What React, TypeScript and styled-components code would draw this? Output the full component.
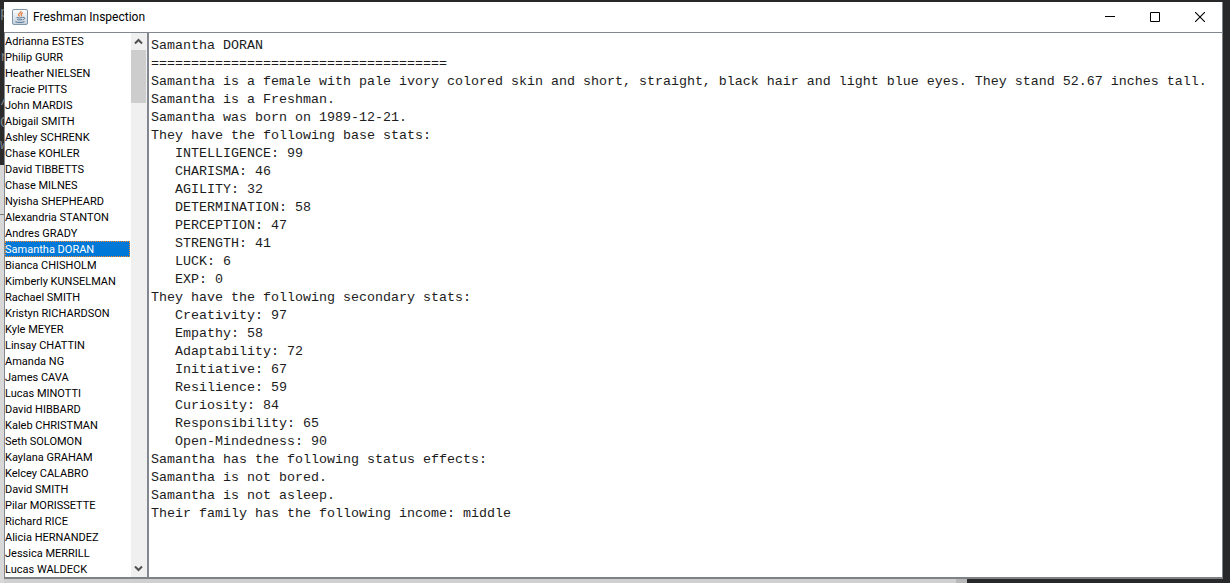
import React, { useState } from "react";
import styled, { createGlobalStyle } from "styled-components";

const GlobalStyle = createGlobalStyle`
  *, *::before, *::after { box-sizing: border-box; }
  body { margin: 0; }
`;

const Desktop = styled.div`
  height: 100vh;
  display: grid;
  grid-template-columns: 4px minmax(0, 1fr) 7px;
  grid-template-rows: 2px minmax(0, 1fr) 4px;
  background: #26282a;
`;

const EditorEdge = styled.div`
  grid-column: 1;
  grid-row: 1 / 4;
  display: flex;
  flex-direction: column;
  padding-top: 2px;
  color: #7b8288;
  font: 14px/22px "Liberation Mono", monospace;
  white-space: pre;
  background: linear-gradient(#2b2b2b 165px, #d8d8d8 165px 214px, #777 214px 215px, #d8d8d8 215px);
`;

const BottomEdge = styled.div`
  grid-column: 2;
  grid-row: 3;
  margin-right: 21%;
  border-right: 11px solid #b8b8b8;
  background: #d0d0d0;
`;

const Window = styled.main`
  grid-column: 2;
  grid-row: 2;
  z-index: 1;
  min-height: 0;
  display: flex;
  flex-direction: column;
  border: solid #7f8284;
  border-width: 0 1px 2px 0;
  background: #fff;
`;

const TitleBar = styled.header`
  flex: none;
  height: 31px;
  display: flex;
  align-items: center;
  padding-left: 8px;
  border-bottom: 1px solid #828790;
`;

const Title = styled.h1`
  flex: 1;
  margin: 0 0 0 5px;
  color: #000;
  font: 400 12px/16px Roboto, "Segoe UI", sans-serif;
`;

const WindowButton = styled.button`
  width: 45px;
  height: 30px;
  padding: 0;
  display: grid;
  place-items: center;
  border: 0;
  background: none;
`;

const Content = styled.div`
  flex: 1;
  min-height: 0;
  display: flex;
`;

const ListPane = styled.nav`
  flex: none;
  width: 145px;
  display: flex;
  border: solid #828790;
  border-width: 0 2px 0 1px;
`;

const Names = styled.ul`
  flex: 1;
  min-width: 0;
  margin: 0;
  padding: 0;
  overflow: hidden;
  list-style: none;
`;

const NameButton = styled.button<{ $selected: boolean }>`
  display: block;
  width: calc(100% - 1px);
  height: 16px;
  padding: 2px 0 0;
  border: 0;
  outline: ${(p) => (p.$selected ? "1px dotted #ff8728" : "none")};
  outline-offset: -1px;
  background: ${(p) => (p.$selected ? "#0078d7" : "transparent")};
  color: ${(p) => (p.$selected ? "#fff" : "#000")};
  font: 11px/14px Roboto, Tahoma, sans-serif;
  text-align: left;
  white-space: nowrap;
`;

const ScrollBar = styled.div`
  flex: none;
  width: 16px;
  display: flex;
  flex-direction: column;
  background: #f0f0f0;
`;

const ScrollButton = styled.button`
  flex: none;
  height: 17px;
  padding: 0;
  display: grid;
  place-items: center;
  border: 0;
  background: none;
`;

const ScrollTrack = styled.div`
  flex: 1;
`;

const ScrollThumb = styled.div`
  height: 53px;
  width: 15px;
  background: #cdcdcd;
`;

const Report = styled.pre`
  flex: 1;
  min-width: 0;
  margin: 0;
  padding: 4px 2px;
  overflow: hidden;
  color: #1c1c1c;
  font: 10pt/18px "Liberation Mono", "Courier New", monospace;
`;

const names = [
  "Adrianna ESTES", "Philip GURR", "Heather NIELSEN", "Tracie PITTS", "John MARDIS",
  "Abigail SMITH", "Ashley SCHRENK", "Chase KOHLER", "David TIBBETTS", "Chase MILNES",
  "Nyisha SHEPHEARD", "Alexandria STANTON", "Andres GRADY", "Samantha DORAN",
  "Bianca CHISHOLM", "Kimberly KUNSELMAN", "Rachael SMITH", "Kristyn RICHARDSON",
  "Kyle MEYER", "Linsay CHATTIN", "Amanda NG", "James CAVA", "Lucas MINOTTI",
  "David HIBBARD", "Kaleb CHRISTMAN", "Seth SOLOMON", "Kaylana GRAHAM",
  "Kelcey CALABRO", "David SMITH", "Pilar MORISSETTE", "Richard RICE",
  "Alicia HERNANDEZ", "Jessica MERRILL", "Lucas WALDECK",
];

const report = `Samantha DORAN
=====================================
Samantha is a female with pale ivory colored skin and short, straight, black hair and light blue eyes. They stand 52.67 inches tall.
Samantha is a Freshman.
Samantha was born on 1989-12-21.
They have the following base stats:
   INTELLIGENCE: 99
   CHARISMA: 46
   AGILITY: 32
   DETERMINATION: 58
   PERCEPTION: 47
   STRENGTH: 41
   LUCK: 6
   EXP: 0
They have the following secondary stats:
   Creativity: 97
   Empathy: 58
   Adaptability: 72
   Initiative: 67
   Resilience: 59
   Curiosity: 84
   Responsibility: 65
   Open-Mindedness: 90
Samantha has the following status effects:
Samantha is not bored.
Samantha is not asleep.
Their family has the following income: middle`;

const JavaIcon = () => (
  <svg width="16" height="16" viewBox="0 0 16 16" aria-hidden="true">
    <defs>
      <linearGradient id="tile" x1="0" y1="0" x2="0" y2="1">
        <stop offset="0" stopColor="#fdfdfd" />
        <stop offset="1" stopColor="#c3d0dc" />
      </linearGradient>
    </defs>
    <rect x="0.5" y="0.5" width="15" height="15" rx="1.5" fill="url(#tile)" stroke="#7f97ad" />
    <path d="M9 2c.8 1.6-3 2.4-2.4 4 .2.6.8.9.9 1.4M11 3.8c-1.8.7-2.4 1.4-1.6 2.3.4.5.2.9-.3 1.3" fill="none" stroke="#e0793a" strokeWidth="1.2" />
    <path d="M4.6 8.5c1.8.5 4.4.5 6 0M5.2 10.5c1.6.5 3.4.5 4.8 0M3.4 12.7c1.6 1 7.2 1 9 0M11 8.4c2.4-.4 2.2 1.8-.4 2.5" fill="none" stroke="#4f7090" strokeWidth="1" />
  </svg>
);

const Chevron = ({ down = false }: { down?: boolean }) => (
  <svg width="10" height="7" viewBox="0 0 10 7" aria-hidden="true">
    <path d={down ? "M1 1.5 4.5 5 8 1.5" : "M1 5.5 4.5 2 8 5.5"} fill="none" stroke="#505050" strokeWidth="2" />
  </svg>
);

export default function App() {
  const [selected, setSelected] = useState("Samantha DORAN");
  return (
    <>
      <GlobalStyle />
      <Desktop>
        <EditorEdge aria-hidden="true">{"p\n\nr\n\n/\nG\nw"}</EditorEdge>
        <BottomEdge />
        <Window>
          <TitleBar>
            <JavaIcon />
            <Title>Freshman Inspection</Title>
            <WindowButton aria-label="Minimize">
              <svg width="10" height="10" viewBox="0 0 10 10"><path d="M0 4.5h10" stroke="#000" /></svg>
            </WindowButton>
            <WindowButton aria-label="Maximize">
              <svg width="10" height="10" viewBox="0 0 10 10"><path d="M.5.5h9v9h-9z" fill="none" stroke="#000" /></svg>
            </WindowButton>
            <WindowButton aria-label="Close">
              <svg width="10" height="10" viewBox="0 0 10 10"><path d="M0 0l10 10M10 0L0 10" stroke="#000" strokeWidth="1.1" /></svg>
            </WindowButton>
          </TitleBar>
          <Content>
            <ListPane aria-label="Students">
              <Names>
                {names.map((name) => (
                  <li key={name}>
                    <NameButton $selected={name === selected} aria-pressed={name === selected} onClick={() => setSelected(name)}>
                      {name}
                    </NameButton>
                  </li>
                ))}
              </Names>
              <ScrollBar>
                <ScrollButton aria-label="Scroll up"><Chevron /></ScrollButton>
                <ScrollTrack><ScrollThumb /></ScrollTrack>
                <ScrollButton aria-label="Scroll down"><Chevron down /></ScrollButton>
              </ScrollBar>
            </ListPane>
            <Report>{report}</Report>
          </Content>
        </Window>
      </Desktop>
    </>
  );
}
